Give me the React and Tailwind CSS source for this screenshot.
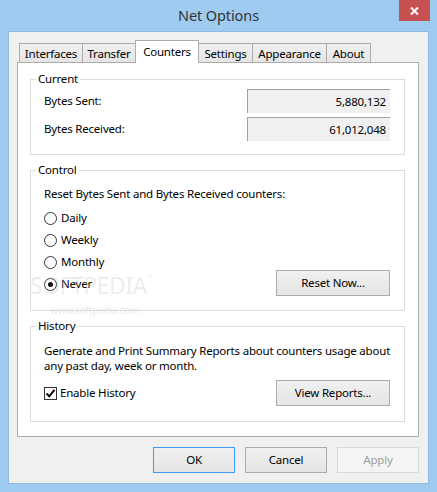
import React from "react";

function Radio({ label, checked }) {
  return (
    <div className="h-[22px] flex items-center">
      <span className="w-[13px] h-[13px] rounded-full border border-[#333333] bg-white flex items-center justify-center">
        {checked && <span className="w-[5px] h-[5px] rounded-full bg-[#111111]" />}
      </span>
      <span className="ml-[4px]">{label}</span>
    </div>
  );
}

function Btn({ children, className = "" }) {
  return (
    <div
      className={
        "h-[26px] flex items-center justify-center border bg-linear-to-b from-[#F0F0F0] to-[#E5E5E5] " +
        className
      }
    >
      {children}
    </div>
  );
}

function Tab({ label, width, selected, first }) {
  if (selected) {
    return (
      <div
        className="h-[23px] -mb-px -ml-px relative z-10 bg-white border border-b-0 border-[#ACACAC] flex items-center justify-center"
        style={{ width }}
      >
        {label}
      </div>
    );
  }
  return (
    <div
      className={
        "h-[19px] border border-b-0 border-[#ACACAC] bg-linear-to-b from-[#F0F0F0] to-[#E5E5E5] flex items-center justify-center pt-px " +
        (first ? "" : "-ml-px")
      }
      style={{ width }}
    >
      {label}
    </div>
  );
}

export default function App() {
  return (
    <div className="w-[437px] h-[492px] bg-[#9FCBF1] relative flex flex-col font-['Noto_Sans',sans-serif] text-[11.5px] tracking-[-0.2px] text-black overflow-hidden">
      {/* title bar */}
      <div className="h-[31px] shrink-0 flex items-center justify-center relative">
        <span className="text-[14.5px] tracking-[-0.1px] leading-none text-[#333333] -mt-[1px]">Net Options</span>
        <div className="absolute top-0 right-[7px] w-[31px] h-[21px] bg-[#C75050] flex items-center justify-center">
          <svg width="9" height="8" viewBox="0 0 9 8">
            <path d="M1 0.5 L8 7.5 M8 0.5 L1 7.5" stroke="white" strokeWidth="2" />
          </svg>
        </div>
      </div>

      {/* client */}
      <div className="mx-[8px] h-[453px] shrink-0 border border-[#8DB9E2] bg-[#F0F0F0] flex flex-col">
        {/* tabs */}
        <div className="flex items-end ml-[10px] mt-[8px] h-[22px]">
          <Tab label="Interfaces" width={64} first />
          <Tab label="Transfer" width={54} />
          <Tab label="Counters" width={64} selected />
          <Tab label="Settings" width={55} />
          <Tab label="Appearance" width={75} />
          <Tab label="About" width={45} />
        </div>

        {/* panel */}
        <div className="ml-[8px] w-[402px] h-[375px] border border-[#ACACAC] bg-white flex flex-col">
          {/* Current */}
          <fieldset className="ml-[12px] w-[375px] min-w-0 mt-[8px] border border-[#DCDCDC]">
            <legend className="ml-[5px] px-[2px] leading-[16px]">Current</legend>
            <div className="pl-[13px] pr-[14px] pt-[2px] pb-[13px] flex flex-col gap-[4px]">
              <div className="flex items-center justify-between">
                <span>Bytes Sent:</span>
                <div className="w-[143px] h-[24px] bg-[#F0F0F0] border-t border-l border-[#A0A0A0] flex items-center justify-end pr-[4px]">
                  5,880,132
                </div>
              </div>
              <div className="flex items-center justify-between">
                <span>Bytes Received:</span>
                <div className="w-[143px] h-[24px] bg-[#F0F0F0] border-t border-l border-[#A0A0A0] flex items-center justify-end pr-[4px]">
                  61,012,048
                </div>
              </div>
            </div>
          </fieldset>

          {/* Control */}
          <fieldset className="ml-[12px] w-[375px] min-w-0 mt-[7px] border border-[#DCDCDC]">
            <legend className="ml-[5px] px-[2px] leading-[16px]">Control</legend>
            <div className="pl-[13px] pr-[14px] pb-[15px]">
              <div className="mt-[8px] leading-[16px] h-[16px] whitespace-nowrap">
                Reset Bytes Sent and Bytes Received counters:
              </div>
              <div className="mt-[5px] flex items-end justify-between">
                <div className="flex flex-col">
                  <Radio label="Daily" />
                  <Radio label="Weekly" />
                  <Radio label="Monthly" />
                  <Radio label="Never" checked />
                </div>
                <Btn className="w-[114px] border-[#ACACAC] -mb-px">Reset Now...</Btn>
              </div>
            </div>
          </fieldset>

          {/* History */}
          <fieldset className="ml-[12px] w-[375px] min-w-0 mt-[7px] border border-[#DCDCDC]">
            <legend className="ml-[5px] px-[2px] leading-[16px]">History</legend>
            <div className="pl-[13px] pr-[14px] pb-[15px]">
              <div className="mt-[9px] leading-[15px] whitespace-nowrap">
                Generate and Print Summary Reports about counters usage about
                <br />
                any past day, week or month.
              </div>
              <div className="mt-[7px] flex items-center justify-between">
                <div className="flex items-center">
                  <span className="w-[13px] h-[13px] border border-[#333333] bg-white flex items-center justify-center">
                    <svg width="11" height="11" viewBox="0 0 11 11">
                      <path d="M1.5 5.5 L4.2 8.3 L9.5 1.8" stroke="#000" strokeWidth="2" fill="none" />
                    </svg>
                  </span>
                  <span className="ml-[3px]">Enable History</span>
                </div>
                <Btn className="w-[114px] border-[#ACACAC]">View Reports...</Btn>
              </div>
            </div>
          </fieldset>
        </div>

        {/* bottom buttons */}
        <div className="mt-[10px] flex justify-end gap-[10px] pr-[9px]">
          <Btn className="w-[82px] border-[#3C9BFF]">OK</Btn>
          <Btn className="w-[82px] border-[#ACACAC]">Cancel</Btn>
          <div className="w-[82px] h-[26px] flex items-center justify-center border border-[#D9D9D9] bg-[#F4F4F4] text-[#A0A0A0]">
            Apply
          </div>
        </div>
      </div>

      {/* watermark */}
      <div className="absolute left-[30px] top-[274px] pointer-events-none text-[23px] tracking-[-0.5px] leading-none text-[#B4B4B4]/25">
        SOFTPEDIA<span className="text-[8px] align-top">™</span>
      </div>
      <div className="absolute left-[50px] top-[305px] pointer-events-none text-[10px] leading-none text-[#B4B4B4]/30">
        www.softpedia.com
      </div>
    </div>
  );
}
